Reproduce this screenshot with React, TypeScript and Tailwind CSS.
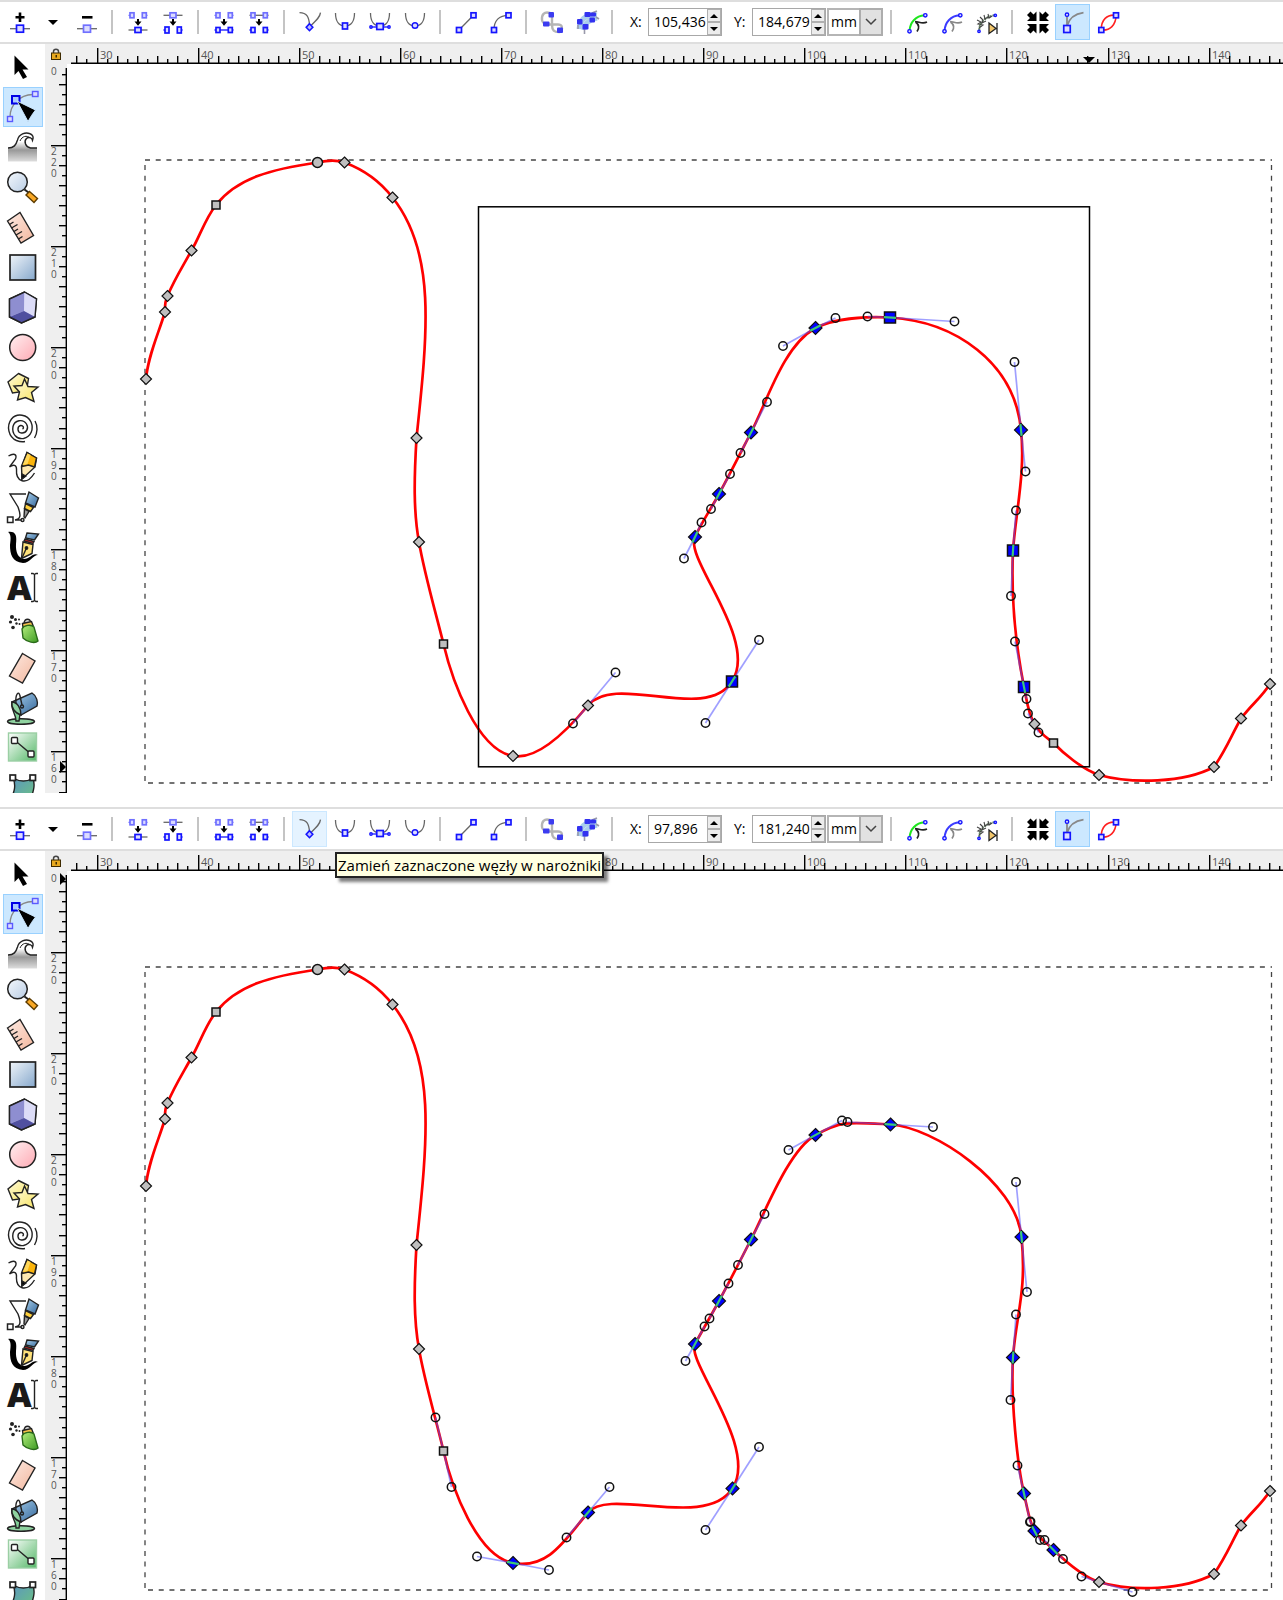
import React from 'react';

type Point = [number, number];
type Shape = 'diamond' | 'square' | 'circle';

interface PathNode {
  at: Point;
  shape: Shape;
  selected?: boolean;
  // handle towards the previous node / towards the next node
  before?: Point;
  after?: Point;
  showHandles?: boolean;
}

interface PanelProps {
  id: string;
  x: string;
  y: string;
  nodes: PathNode[];
  rubberBand?: boolean;
  tooltip?: string;
  markerX?: number;
  markerY: number;
}

const startNodes: PathNode[] = [
  { at: [146, 379], shape: 'diamond', after: [148, 356] },
  { at: [165, 312], shape: 'diamond', before: [158, 335], after: [165, 306] },
  { at: [167.5, 296], shape: 'diamond', before: [164.5, 302], after: [174, 280] },
  { at: [191.5, 250.5], shape: 'diamond', before: [183, 266], after: [200, 236] },
  { at: [216, 205], shape: 'square', before: [205, 219], after: [237, 178] },
  { at: [317.5, 162.5], shape: 'circle', before: [272, 169], after: [330, 160] },
  { at: [344.5, 162.5], shape: 'diamond', before: [336, 160], after: [362, 169] },
  { at: [392.5, 197.5], shape: 'diamond', before: [379, 180], after: [436, 252] },
  { at: [416.5, 438], shape: 'diamond', before: [428, 330], after: [414, 480] },
  { at: [419, 542], shape: 'diamond', before: [413.5, 512], after: [424, 572] },
];

const endNodes: PathNode[] = [
  { at: [1214, 767], shape: 'diamond', before: [1184, 783], after: [1227, 748] },
  { at: [1241, 718.5], shape: 'diamond', before: [1231, 736], after: [1252, 704] },
  { at: [1270, 684], shape: 'diamond', before: [1261, 698] },
];

const beforeNodes: PathNode[] = [
  ...startNodes,
  { at: [443.5, 644], shape: 'square', before: [435, 610], after: [452, 680] },
  { at: [513, 756], shape: 'diamond', before: [477, 750], after: [540, 761] },
  { at: [588, 705.5], shape: 'diamond', before: [573, 723.5], after: [615.5, 672.5], showHandles: true },
  { at: [732, 681.5], shape: 'square', selected: true, before: [705.5, 723], after: [759, 640], showHandles: true },
  { at: [695, 537], shape: 'diamond', selected: true, before: [684, 558.5], after: [701.5, 522.5], showHandles: true },
  { at: [719, 494], shape: 'diamond', selected: true, before: [711, 509], after: [730, 474], showHandles: true },
  { at: [751, 432.5], shape: 'diamond', selected: true, before: [740.5, 453], after: [767, 402], showHandles: true },
  { at: [815.5, 328], shape: 'diamond', selected: true, before: [783, 346], after: [835.5, 318], showHandles: true },
  { at: [890, 317.5], shape: 'square', selected: true, before: [867.5, 316.5], after: [954.5, 321.5], showHandles: true },
  { at: [1021, 430], shape: 'diamond', selected: true, before: [1014.5, 362], after: [1025.5, 471.5], showHandles: true },
  { at: [1013, 550.5], shape: 'square', selected: true, before: [1016, 510.5], after: [1011, 596], showHandles: true },
  { at: [1024, 687], shape: 'square', selected: true, before: [1015, 641.5], after: [1026.5, 699], showHandles: true },
  { at: [1034.5, 724], shape: 'diamond', before: [1028, 713.5], after: [1038.5, 732.5], showHandles: true },
  { at: [1053.5, 743], shape: 'square', before: [1047, 738], after: [1063, 753] },
  { at: [1099, 775], shape: 'diamond', before: [1082, 769], after: [1132, 784] },
  ...endNodes,
];

const afterNodes: PathNode[] = [
  ...startNodes,
  { at: [443.5, 644], shape: 'square', before: [435.5, 610.5], after: [451.5, 680], showHandles: true },
  { at: [513, 756], shape: 'diamond', selected: true, before: [477, 749.5], after: [549, 763], showHandles: true },
  { at: [588, 705.5], shape: 'diamond', selected: true, before: [566.5, 730.5], after: [609.5, 680], showHandles: true },
  { at: [732.5, 681.5], shape: 'diamond', selected: true, before: [705.5, 723], after: [759, 640], showHandles: true },
  { at: [695, 537], shape: 'diamond', selected: true, before: [685.5, 554], after: [704.5, 519.5], showHandles: true },
  { at: [719, 494], shape: 'diamond', selected: true, before: [709.5, 511.5], after: [728.5, 476.5], showHandles: true },
  { at: [751, 432.5], shape: 'diamond', selected: true, before: [738, 458], after: [764.5, 407], showHandles: true },
  { at: [815.5, 328], shape: 'diamond', selected: true, before: [788.5, 343], after: [842, 313.5], showHandles: true },
  { at: [890.5, 317.5], shape: 'diamond', selected: true, before: [847.5, 315], after: [933, 320], showHandles: true },
  { at: [1021.5, 430], shape: 'diamond', selected: true, before: [1016, 375], after: [1027, 485], showHandles: true },
  { at: [1013, 550.5], shape: 'diamond', selected: true, before: [1016, 507.5], after: [1010.5, 593], showHandles: true },
  { at: [1024, 686.5], shape: 'diamond', selected: true, before: [1017.5, 658.5], after: [1030, 715], showHandles: true },
  { at: [1034.5, 724], shape: 'diamond', selected: true, before: [1030.5, 714.5], after: [1040, 733], showHandles: true },
  { at: [1053.5, 743], shape: 'diamond', selected: true, before: [1044.5, 733], after: [1063, 752], showHandles: true },
  { at: [1099, 775], shape: 'diamond', before: [1081.5, 769.5], after: [1132.5, 785], showHandles: true },
  ...endNodes,
];

const buildPath = (nodes: PathNode[]) =>
  nodes
    .map((n, i) => {
      if (i === 0) return `M${n.at.join(' ')}`;
      const prev = nodes[i - 1];
      const c1 = prev.after ?? prev.at;
      const c2 = n.before ?? n.at;
      return `C${c1.join(' ')} ${c2.join(' ')} ${n.at.join(' ')}`;
    })
    .join('');

/* ---------- Toolbar icons ---------- */

const BLUE = '#1414ff';
const PALE = '#7070ff';

const Icon = ({ children }: { children: React.ReactNode }) => (
  <svg className="w-[30px] h-[30px]" viewBox="0 0 30 30" fill="none" stroke="#666" strokeWidth="1.3" aria-hidden="true">
    {children}
  </svg>
);

const Sq = ({ x, y, w = 5, h = 5, c = BLUE }: { x: number; y: number; w?: number; h?: number; c?: string }) => (
  <rect x={x - w / 2} y={y - h / 2} width={w} height={h} fill="#dcdcff" stroke={c} strokeWidth="1.7" />
);

const Dot = ({ x, y, r = 1.7 }: { x: number; y: number; r?: number }) => (
  <circle cx={x} cy={y} r={r} fill="#dcdcff" stroke={BLUE} strokeWidth="1.4" />
);

const DownArrow = () => (
  <g stroke="none" fill="#000">
    <rect x="14" y="12" width="2" height="4" />
    <path d="M11.5 14.5h7L15 18.8z" />
  </g>
);

const InsertNode = () => (
  <Icon>
    <path d="M15 5.5v9.5M10.5 10.3h9" stroke="#000" strokeWidth="2.6" />
    <path d="M5 21.7h20" />
    <Sq x={15} y={21.7} w={7} h={7} />
  </Icon>
);

const DeleteNode = () => (
  <Icon>
    <path d="M10 10.3h10.5" stroke="#000" strokeWidth="2.6" />
    <path d="M5 21.7h20" />
    <Sq x={15} y={21.7} w={7} h={7} c={PALE} />
  </Icon>
);

const JoinNodes = () => (
  <Icon>
    <path d="M5.5 8.3h3M21.5 8.3h3" stroke={PALE} />
    <Sq x={9} y={8.3} w={4} c={PALE} />
    <Sq x={21.3} y={8.3} w={4} c={PALE} />
    <DownArrow />
    <path d="M5.5 23h19" />
    <Sq x={15} y={23} w={6} />
  </Icon>
);

const BreakNode = () => (
  <Icon>
    <path d="M5.5 8.3h19" />
    <Sq x={15} y={8.3} w={6} c={PALE} />
    <DownArrow />
    <path d="M5.5 23h3M21.5 23h3" stroke={BLUE} />
    <Sq x={9} y={23} w={4} h={6} />
    <Sq x={21.3} y={23} w={4} h={6} />
  </Icon>
);

const JoinSegment = () => (
  <Icon>
    <path d="M5.5 8.3h3M21.5 8.3h3" stroke={PALE} />
    <Sq x={9} y={8.3} w={4} c={PALE} />
    <Sq x={21.3} y={8.3} w={4} c={PALE} />
    <DownArrow />
    <path d="M5.5 23h19" stroke={BLUE} />
    <Sq x={9} y={23} w={4} />
    <Sq x={21.3} y={23} w={4} />
  </Icon>
);

const DeleteSegment = () => (
  <Icon>
    <path d="M5.5 8.3h19" />
    <Sq x={9} y={8.3} w={4} c={PALE} />
    <Sq x={21.3} y={8.3} w={4} c={PALE} />
    <DownArrow />
    <path d="M5.5 23h3M21.5 23h3" stroke={BLUE} />
    <Sq x={9} y={23} w={4} />
    <Sq x={21.3} y={23} w={4} />
  </Icon>
);

const MakeCorner = () => (
  <Icon>
    <path d="M4.5 5.7C12 6 14 10 14.5 18M25.5 5.7C25 10 22 13 16 18.5" />
    <path d="M14.5 16.7l3.3 3.5-3.3 3.5-3.3-3.5z" fill="#bcbcff" stroke={BLUE} strokeWidth="1.6" />
  </Icon>
);

const MakeSmooth = () => (
  <Icon>
    <path d="M5.5 6C5.5 14 9 19 15 19S24.5 14 24.5 6" />
    <Sq x={15} y={19} w={5} h={6} />
  </Icon>
);

const MakeSymmetric = () => (
  <Icon>
    <path d="M5.5 6C5.5 14 9 19 15 19S24.5 14 24.5 6" />
    <path d="M6 20h18" stroke={BLUE} />
    <Dot x={6} y={20} r={1.2} />
    <Dot x={24} y={20} r={1.2} />
    <Sq x={15} y={19.5} w={6.5} h={6} />
  </Icon>
);

const MakeAuto = () => (
  <Icon>
    <path d="M5.5 6C5.5 14 9 19 15 19S24.5 14 24.5 6" />
    <Dot x={15} y={18.5} r={2.8} />
  </Icon>
);

const MakeLine = () => (
  <Icon>
    <path d="M8 23L22.5 8.3" />
    <Sq x={8} y={23} />
    <Sq x={22.5} y={8.3} />
  </Icon>
);

const MakeCurve = () => (
  <Icon>
    <path d="M8 23C8 14 13 8.3 22.5 8.3" />
    <Sq x={8} y={23} />
    <Sq x={22.5} y={8.3} />
  </Icon>
);

const ObjectToPath = () => (
  <Icon>
    <path d="M13 6C7 4 4.500 8 5 13c.3 3 2 4 8 4.500h8c4 0 5 3 3 6M15 8v10c0 5 2 7.500 8 7" stroke="#b5b5b5" strokeWidth="2.4" />
    <g fill="#3c3cf0" stroke="none">
      <rect x="11.500" y="5" width="5.500" height="5.500" rx="1" />
      <rect x="6" y="14.500" width="6.500" height="5" rx="1" />
      <rect x="20" y="20.500" width="6" height="5.500" rx="1" />
    </g>
  </Icon>
);

const StrokeToPath = () => (
  <Icon>
    <path d="M7 22c1-9 6-15 18-14M12 23c0-5 4-10 13-12" stroke="#a9cdec" strokeWidth="5" />
    <path d="M12.500 22v5M6 18v4M20 6l5-2M24 10l3 2" stroke="#99a" strokeWidth="1.6" />
    <g fill="#3232f0" stroke="none">
      <rect x="12.500" y="5" width="6" height="5" rx="1" />
      <rect x="18" y="5.500" width="6" height="4" rx="1" />
      <rect x="5" y="12" width="5.500" height="5.500" rx="1" />
      <rect x="10.500" y="17" width="6" height="5.500" rx="1" />
      <rect x="17.500" y="10.500" width="5.500" height="5" rx="1" />
    </g>
  </Icon>
);

const EditClip = () => (
  <Icon>
    <path d="M7.5 24C8 15 14 9 22.5 8.3" stroke="#1ee61e" strokeWidth="2" />
    <path d="M13 14.5c4 0 7 3 12 .5M13.500 15c4 3 4 6 1.500 9.500" stroke="#222" strokeWidth="1.7" />
    <Dot x={7.5} y={24.3} />
    <Dot x={23.3} y={8.3} />
  </Icon>
);

const EditMask = () => (
  <Icon>
    <path d="M7.5 24C8 15 14 9 22.5 8.3" stroke="#3c3cff" strokeWidth="2" />
    <path d="M13 14.5c4 0 7 3 12 .5M13.500 15c4 3 4 6 1.500 9.500" stroke="#888" strokeWidth="1.7" />
    <Dot x={7.5} y={24.3} />
    <Dot x={23.3} y={8.3} />
  </Icon>
);

const PathEffect = () => (
  <Icon>
    <path d="M7.3 23C7 15 14 9.500 22.5 8.3" stroke="#668866" strokeDasharray="2 1" strokeWidth="2" />
    <path d="M5 13l4 2-3 2 5 1-4 3M8 10l3 3-1 3 4-2M12 8l1 4 3-2M16 7l1 4 3-2" stroke="#444" strokeWidth="1.1" />
    <path d="M17 16l7 5.500-7 5zM25 16v11" fill="#f2c66b" stroke="#222" />
    <Dot x={7} y={24.3} r={1.2} />
    <Dot x={23.3} y={8.3} r={1.2} />
  </Icon>
);

const ShowTransform = () => (
  <Icon>
    <g stroke="none" fill="#000">
      {['', 'rotate(90 15 15.5)', 'rotate(180 15 15.5)', 'rotate(270 15 15.5)'].map((t) => (
        <path key={t} transform={t} d="M4 8L7.5 4.500l3 3 3-3v9.500H4l3-3z" />
      ))}
    </g>
  </Icon>
);

const ShowHandles = () => (
  <Icon>
    <path d="M9 9v13M9 19C11 12 16 7 25.5 5.7" stroke="#888" strokeWidth="1.8" />
    <Dot x={9} y={7.7} />
    <Sq x={9} y={22} w={6.5} h={7} />
  </Icon>
);

const ShowOutline = () => (
  <Icon>
    <path d="M8.3 23C8 13 14 7 23 8.3C23 18 17 24 8.3 23z" stroke="#ff2020" strokeWidth="1.6" />
    <Sq x={8.3} y={23} />
    <Sq x={23} y={8.3} />
  </Icon>
);

/* ---------- Toolbox icons ---------- */

const Tool = ({ children }: { children: React.ReactNode }) => (
  <svg className="w-8 h-8 overflow-visible" viewBox="0 0 32 32" fill="none" stroke="#222" strokeWidth="1.4" aria-hidden="true">
    {children}
  </svg>
);

const tools: { name: string; icon: React.ReactNode }[] = [
  {
    name: 'Wskaźnik',
    icon: <path d="M7.5 4.500v19.500l4-4 4.500 8 4-2-4.500-7.500h6z" fill="#000" stroke="none" />,
  },
  {
    name: 'Edycja węzłów',
    icon: (
      <>
        <path d="M3 26C3 14 12 4 26 3.5" stroke="#888" />
        <rect x="0.5" y="25.5" width="5" height="5" fill="#dcdcff" stroke="#5a5aff" />
        <rect x="25.5" y="0.5" width="5.5" height="5" fill="#dcdcff" stroke="#5a5aff" />
        <rect x="5" y="5" width="7.5" height="7.5" fill="#aacbff" stroke="#0000e6" strokeWidth="2" />
        <path d="M10 10L28.5 19q-4 5-7.500 11.500z" fill="#000" stroke="#cce8ff" strokeWidth="1" />
      </>
    ),
  },
  {
    name: 'Ulepszanie',
    icon: (
      <>
        <path d="M1 17c6 0 8-3 9.500-8 1.500-6 8-8 12-6.500 3.500 1 4.500 4 3 7-.5-3-4-4-6-2-3 3-1 8.500 4 9.500h6.500v13.500H1z" fill="url(#wave)" stroke="none" />
        <path d="M1 17c6 0 8-3 9.500-8 1.500-6 8-8 12-6.500 3.500 1 4.500 4 3 7-.5-3-4-4-6-2-3 3-1 8.500 4 9.500h6.500" />
        <path d="M13 10c2-5 7-6 10-3" strokeWidth="1" />
      </>
    ),
  },
  {
    name: 'Powiększenie',
    icon: (
      <>
        <path d="M17.5 18.5l4 3" strokeWidth="2" />
        <path d="M22.5 20.500l8 7-3.500 4-8-7.500z" fill="#f9a825" stroke="#5d3c00" />
        <circle cx="10.5" cy="11" r="9.8" fill="url(#glass)" strokeWidth="1.5" />
      </>
    ),
  },
  {
    name: 'Miarka',
    icon: (
      <>
        <path d="M0.5 10L13 1.5l13.5 23L14 32z" fill="url(#peach)" />
        <path d="M2.5 13.5l4-2.5M4.5 17l6-3.5M7 20.5l4-2.5M9 24l6-3.5M11.5 28l4-2.5" />
      </>
    ),
  },
  {
    name: 'Prostokąt',
    icon: <rect x="3" y="4" width="25.5" height="25" fill="url(#steel)" strokeWidth="1.7" />,
  },
  {
    name: 'Obiekt 3D',
    icon: (
      <>
        <path d="M17.5 1l12 7-1.5 18-13.5 6L2.5 26V8z" fill="#b9b9e6" />
        <path d="M17.5 1l12 7-1.5 18-11-6z" fill="#dcdcf7" stroke="none" />
        <path d="M17 1.5v18.5L3 25.5V8z" fill="#8e8ed0" stroke="none" />
        <path d="M17 20l11 6-13.5 6L2.5 26z" fill="#5050a0" stroke="none" />
        <path d="M17.5 1l12 7-1.5 18-13.5 6L2.5 26V8z" />
      </>
    ),
  },
  {
    name: 'Okrąg',
    icon: <circle cx="15.7" cy="16.5" r="13" fill="url(#rose)" strokeWidth="1.5" />,
  },
  {
    name: 'Gwiazda',
    icon: (
      <g fill="url(#lemon)">
        <path d="M11.5 2.500l10 5-2 12.5-14 2L1 11z" />
        <path d="M17.500 8l3.5 7.5 10 .5-6.5 5.500 2.5 9-8.500-4-8 2.500 2-8-5.500-6 8-.5z" />
      </g>
    ),
  },
  {
    name: 'Spirala',
    icon: (
      <path d="M15.500 18c2-1 .5-4-2-3.500-3.500 1-3.500 7 1 7.500 5 .5 7.500-5 5-9C16 7.500 7.500 9 6 15.500 4.500 23 10 28.500 16.500 27.500 24 26 27 18 24 11 20.500 3.500 10 1.500 4.500 8c-5.500 7-3 18 5 21.500 2.500 1 6 1.500 8.500 1M27.500 27c3-5 3.500-12 .5-17" />
    ),
  },
  {
    name: 'Ołówek',
    icon: (
      <>
        <path d="M1.5 5c5-3 9-2 7 3l-6 8c4-3 7-2 7 2-1 13 10 17 18 4" />
        <path d="M15 28l-.5-13L20 1.500l9.500 5.500-1.500 9z" fill="#ffe9b0" />
        <path d="M15 15.5L20 1.5l9.5 5.5-2 9-6-2z" fill="#fbb40a" />
        <path d="M20.500 2.500l3 1.500-3 9-5 1z" fill="#ffd75a" stroke="none" />
        <path d="M14.8 28v-5l4 2z" fill="#000" />
      </>
    ),
  },
  {
    name: 'Krzywa Beziera',
    icon: (
      <>
        <path d="M19 3H3l8 13c3 8 3 12-3 13h7" />
        <rect x="0.5" y="26" width="5.5" height="5.5" fill="#fff" strokeWidth="1.5" />
        <circle cx="15.5" cy="29" r="1.5" fill="#fff" />
        <path d="M22 1l9.500 6-3.500 9-9.500-4z" fill="url(#pen)" />
        <path d="M18.500 12.500l8 4-3 4-6-3z" fill="#ffd03c" />
        <path d="M17.500 18l4.500 2.500-4 6.500-1-1z" fill="#999" />
      </>
    ),
  },
  {
    name: 'Kaligrafia',
    icon: (
      <>
        <path d="M1 1c8-1 9 4 8 12-.5 8 2 14 8 15 6 0 9-7 14-4-5 0-8 8-15 8C5 31 3 23 3 14 4 7 4 3 1 1z" fill="#000" stroke="none" />
        <path d="M20 2l11.500 1-4 6-9-2z" fill="url(#pen)" />
        <path d="M18 8l9 2.5-1 2-9-2.5z" fill="#d22" />
        <path d="M16 11l10 2.5-1 9-10.5 5z" fill="#ffe27a" />
        <path d="M15 27l4-9" />
        <circle cx="19.5" cy="17" r="1.2" fill="#000" />
      </>
    ),
  },
  {
    name: 'Tekst',
    icon: (
      <>
        <text x="0" y="29" fontFamily="Open Sans, sans-serif" fontSize="34" fontWeight="800" fill="#1a1a1a" stroke="none">A</text>
        <path d="M27.5 3v27M24 2.5h2l1.5 1 1.5-1h2M24 30.5h2l1.5-1 1.5 1h2" />
      </>
    ),
  },
  {
    name: 'Natryskiwanie',
    icon: (
      <>
        <g fill="#222" stroke="none">
          <circle cx="5" cy="6" r="2" />
          <circle cx="3.500" cy="11" r="1.600" />
          <circle cx="8.500" cy="8.500" r="1.500" />
          <circle cx="6" cy="16.500" r="1.800" />
          <circle cx="9.500" cy="12.500" r="1.200" />
          <circle cx="12" cy="8.500" r="1" />
          <circle cx="12.500" cy="13" r="1" />
        </g>
        <path d="M17 12c1-5 6-5 7 0" fill="#ddd" />
        <path d="M15.500 12.500l9-2 1.500 4-10 2z" fill="#f5c04a" />
        <path d="M15 18c2-4 9-5 12-2l4 14c-3 3-11 1-15-3z" fill="url(#spray)" stroke="#2a6a1a" />
      </>
    ),
  },
  {
    name: 'Gumka',
    icon: <path d="M15.500 2.500L28 10 15.500 32 2.5 25z" fill="url(#peach)" />,
  },
  {
    name: 'Wypełnianie',
    icon: (
      <>
        <ellipse cx="14" cy="30.5" rx="13.500" ry="2.8" fill="#8fd3a0" />
        <path d="M5 11l8-1 1 7-1 6-1 7-3 0c0-8-5-9-4-19z" fill="#7fcf96" />
        <path d="M5 11L25 2c5 3 6 9 5 13L14 24C8 22 4 16 5 11z" fill="url(#pen)" />
        <path d="M5 11c-1 6 3 11 9 13 0-7-4-13-9-13z" fill="#8fd3a0" />
        <path d="M9 12C8 3 12-1 13 5l2 9" />
        <circle cx="15" cy="15.5" r="1.5" />
      </>
    ),
  },
  {
    name: 'Gradient',
    icon: (
      <>
        <rect x="1.5" y="2" width="28" height="28" fill="url(#grad)" stroke="#9bcfa4" />
        <path d="M8 9.500l16 13.500" />
        <rect x="4.5" y="6.500" width="6" height="6" rx="1" fill="#fff" />
        <rect x="21" y="20" width="6" height="6" rx="1" fill="#fff" />
      </>
    ),
  },
  {
    name: 'Siatka',
    icon: (
      <>
        <path d="M6 7c7 4 14 4 20 0 3 9-1 16-3 24H3c3-8 7-15 3-24z" fill="url(#mesh)" />
        <rect x="3" y="4" width="5.5" height="5.5" fill="#fff" strokeWidth="1.7" />
        <rect x="23" y="4" width="5.5" height="5.5" fill="#fff" strokeWidth="1.7" />
      </>
    ),
  },
];

const Gradient = ({ id, from, to }: { id: string; from: string; to: string }) => (
  <linearGradient id={id} x1="0" y1="0" x2="1" y2="1">
    <stop offset="0" stopColor={from} />
    <stop offset="1" stopColor={to} />
  </linearGradient>
);

/* ---------- Toolbar parts ---------- */

interface ToolButtonProps {
  label: string;
  active?: boolean;
  hovered?: boolean;
  children: React.ReactNode;
}

const ToolButton: React.FC<ToolButtonProps> = ({ label, active, hovered, children }) => (
  <button
    aria-label={label}
    className={`flex h-9 w-[35px] shrink-0 items-center justify-center border ${
      active ? 'border-[#99d1ff] bg-[#cce8ff]' : hovered ? 'border-[#cce8ff] bg-[#e5f3ff]' : 'border-transparent'
    }`}
  >
    {children}
  </button>
);

const Separator = () => <div className="mx-[7px] h-6 w-[2px] shrink-0 bg-[#c4c4c4]" />;

const NumberField = ({ id, label, value }: { id: string; label: string; value: string }) => (
  <>
    <label htmlFor={id} className="w-[18px] shrink-0">{label}</label>
    <div className="flex h-7 w-[74px] shrink-0 border border-[#a8a8a8]">
      <input id={id} defaultValue={value} className="w-[57px] min-w-0 bg-white pl-[5px] text-sm outline-none" />
      <div className="ml-auto flex w-[14px] flex-col">
        <button aria-label={`${label} +`} className="flex flex-1 items-center justify-center border border-[#b0b0b0] bg-[#ececec]">
          <svg className="h-1 w-2" viewBox="0 0 8 4"><path d="M0 4l4-4 4 4z" /></svg>
        </button>
        <button aria-label={`${label} -`} className="flex flex-1 items-center justify-center border border-[#b0b0b0] bg-[#ececec]">
          <svg className="h-1 w-2" viewBox="0 0 8 4"><path d="M0 0l4 4 4-4z" /></svg>
        </button>
      </div>
    </div>
  </>
);

const Toolbar = ({ id, x, y, tooltip }: { id: string; x: string; y: string; tooltip?: string }) => (
  <div className="flex h-11 items-center overflow-hidden border-y-2 border-[#dedede] bg-white pl-[2px] text-sm">
    <ToolButton label="Wstaw węzeł"><InsertNode /></ToolButton>
    <button aria-label="Więcej" className="flex h-9 w-8 shrink-0 items-center justify-center">
      <svg className="h-[5px] w-[10px]" viewBox="0 0 10 5"><path d="M0 0h10L5 5z" /></svg>
    </button>
    <ToolButton label="Usuń węzeł"><DeleteNode /></ToolButton>
    <Separator />
    <ToolButton label="Połącz węzły"><JoinNodes /></ToolButton>
    <ToolButton label="Rozłącz węzły"><BreakNode /></ToolButton>
    <Separator />
    <ToolButton label="Połącz odcinkiem"><JoinSegment /></ToolButton>
    <ToolButton label="Usuń odcinek"><DeleteSegment /></ToolButton>
    <Separator />
    <ToolButton label="Narożniki" hovered={!!tooltip}><MakeCorner /></ToolButton>
    <ToolButton label="Gładkie"><MakeSmooth /></ToolButton>
    <ToolButton label="Symetryczne"><MakeSymmetric /></ToolButton>
    <ToolButton label="Automatyczne"><MakeAuto /></ToolButton>
    <Separator />
    <ToolButton label="Zamień na linie"><MakeLine /></ToolButton>
    <ToolButton label="Zamień na krzywe"><MakeCurve /></ToolButton>
    <Separator />
    <ToolButton label="Obiekt w ścieżkę"><ObjectToPath /></ToolButton>
    <ToolButton label="Kontur w ścieżkę"><StrokeToPath /></ToolButton>
    <Separator />
    <div className="flex shrink-0 items-center gap-0 pl-[10px]">
      <NumberField id={`${id}-x`} label="X:" value={x} />
      <div className="w-3" />
      <NumberField id={`${id}-y`} label="Y:" value={y} />
    </div>
    <div className="relative ml-[1px] h-7 w-14 shrink-0">
      <select aria-label="Jednostka" className="h-full w-full appearance-none border-2 border-[#b5b5b5] bg-white pl-[2px] text-sm outline-none">
        <option>mm</option>
        <option>px</option>
      </select>
      <div className="pointer-events-none absolute inset-y-0 right-0 flex w-6 items-center justify-center border-2 border-[#adadad] bg-[#e1e1e1]">
        <svg className="h-2 w-3" viewBox="0 0 12 8" fill="none" stroke="#444" strokeWidth="1.5"><path d="M1 1l5 5 5-5" /></svg>
      </div>
    </div>
    <Separator />
    <ToolButton label="Edytuj przycięcie"><EditClip /></ToolButton>
    <ToolButton label="Edytuj maskę"><EditMask /></ToolButton>
    <ToolButton label="Efekt ścieżki"><PathEffect /></ToolButton>
    <Separator />
    <ToolButton label="Uchwyty przekształcenia"><ShowTransform /></ToolButton>
    <ToolButton label="Uchwyty węzłów" active><ShowHandles /></ToolButton>
    <ToolButton label="Kontur ścieżki"><ShowOutline /></ToolButton>
  </div>
);

/* ---------- Rulers ---------- */

const STEP = 10.11;

const HorizontalRuler = ({ marker }: { marker?: number }) => (
  <svg className="h-5 min-w-0 flex-1 bg-[#efefef]" aria-hidden="true">
    <g transform="translate(-67 -44)">
      <path d="M71 63.2H3000" stroke="#000" strokeWidth="1.6" />
      {Array.from({ length: 120 }, (_, k) => {
        const i = k - 2;
        const x = Math.round(96.500 + i * STEP);
        const major = i % 10 === 0;
        return (
          <g key={i}>
            <rect x={x} y={major ? 48 : i % 2 === 0 ? 56 : 59} width="1.4" height={major ? 15 : i % 2 === 0 ? 7 : 4} />
            {major && (
              <text x={x + 3} y={59} fontSize="11" fill="#555" fontFamily="Open Sans, sans-serif">{30 + i}</text>
            )}
          </g>
        );
      })}
      {marker && <path d={`M${marker - 6} 57h12l-6 6z`} />}
    </g>
  </svg>
);

const VerticalRuler = ({ marker }: { marker: number }) => (
  <svg className="h-full w-[22px] shrink-0 bg-[#efefef]" aria-hidden="true">
    <g transform="translate(-45 -64)">
      <path d="M66.3 68V793" stroke="#000" strokeWidth="1.4" />
      <text x="51" y="75" fontSize="10" fill="#555" fontFamily="Open Sans, sans-serif">0</text>
      {Array.from({ length: 72 }, (_, k) => {
        const i = k - 7;
        const y = Math.round(144.500 + i * STEP);
        const major = i % 10 === 0;
        const from = major ? 51 : i % 2 === 0 ? 59 : 62;
        return (
          <g key={i}>
            <rect x={from} y={y} width={67 - from} height="1.4" />
            {major &&
              String(220 - i).split('').map((d, n) => (
                <text key={n} x="51" y={y + 10 + n * 11} fontSize="10" fill="#555" fontFamily="Open Sans, sans-serif">{d}</text>
              ))}
          </g>
        );
      })}
      <path d={`M60 ${marker - 6}v12l6-6z`} />
    </g>
  </svg>
);

/* ---------- Canvas ---------- */

const NodeMark = ({ node }: { node: PathNode }) => {
  const [x, y] = node.at;
  const fill = node.selected ? '#0000ff' : '#bfbfbf';
  const r = node.selected ? 6.5 : 5.5;
  const s = node.selected ? 5.5 : 4;
  const a = node.before ?? node.at;
  const b = node.after ?? node.at;
  const len = Math.hypot(b[0] - a[0], b[1] - a[1]) || 1;
  const dx = ((b[0] - a[0]) / len) * 6;
  const dy = ((b[1] - a[1]) / len) * 6;
  return (
    <g stroke="#111" strokeWidth="1.2" fill={fill}>
      {node.shape === 'diamond' && <path d={`M${x} ${y - r}l${r} ${r}-${r} ${r}-${r}-${r}z`} />}
      {node.shape === 'square' && <rect x={x - s} y={y - s} width={s * 2} height={s * 2} strokeWidth="1.5" />}
      {node.shape === 'circle' && <circle cx={x} cy={y} r="5" strokeWidth="1.5" />}
      {node.selected && <path d={`M${x - dx} ${y - dy}L${x + dx} ${y + dy}`} stroke="#3cc878" strokeWidth="2.2" />}
    </g>
  );
};

const Canvas = ({ nodes, rubberBand }: { nodes: PathNode[]; rubberBand?: boolean }) => {
  const handles = nodes.flatMap((n) =>
    n.showHandles && n.before && n.after ? [{ from: n.at, to: n.before }, { from: n.at, to: n.after }] : []
  );
  return (
    <svg className="h-full min-w-0 flex-1" role="img" aria-label="Ścieżka">
      <g transform="translate(-67 -64)" fill="none">
        <g stroke="#444" strokeWidth="1.3" strokeDasharray="5 5.72">
          <path d="M145 160H1272M148 783H1272" />
          <path d="M145 165V783M1271.5 165V783" />
        </g>
        <path d={buildPath(nodes)} stroke="#ff0000" strokeWidth="2.7" />
        {rubberBand && <rect x="478.5" y="206.8" width="611" height="560" stroke="#000" strokeWidth="1.5" />}
        {handles.map((h, i) => (
          <path key={i} d={`M${h.from.join(' ')}L${h.to.join(' ')}`} stroke="#5050ff" strokeOpacity="0.55" strokeWidth="1.7" />
        ))}
        {nodes.map((n, i) => (
          <NodeMark key={i} node={n} />
        ))}
        {handles.map((h, i) => (
          <circle key={i} cx={h.to[0]} cy={h.to[1]} r="4.2" stroke="#111" strokeWidth="1.5" />
        ))}
      </g>
    </svg>
  );
};

const Panel: React.FC<PanelProps> = ({ id, x, y, nodes, rubberBand, tooltip, markerX, markerY }) => (
  <section className="relative">
    <Toolbar id={id} x={x} y={y} tooltip={tooltip} />
    <div className="flex h-[749px]">
      <div className="flex w-[45px] shrink-0 flex-col overflow-hidden pl-[3px] pt-[3px]">
        {tools.map((t, i) => (
          <button
            key={t.name}
            aria-label={t.name}
            className={`flex h-10 w-10 shrink-0 items-center justify-center border ${
              i === 1 ? 'border-[#99d1ff] bg-[#cce8ff]' : 'border-transparent'
            }`}
          >
            <Tool>{t.icon}</Tool>
          </button>
        ))}
      </div>
      <div className="flex min-w-0 flex-1 flex-col">
        <div className="flex h-5 shrink-0">
          <button aria-label="Blokada prowadnic" className="flex w-[22px] shrink-0 items-center justify-center bg-[#efefef]">
            <svg className="h-3 w-3" viewBox="0 0 12 12" aria-hidden="true">
              <path d="M3.5 6V3.5C3.5 0.5 8.5 0.5 8.5 3.5V6" fill="none" stroke="#444" strokeWidth="1.5" />
              <rect x="1.5" y="5" width="9" height="6.5" fill="#e8a920" stroke="#3d2a00" />
              <rect x="5.5" y="7" width="1.5" height="2.5" fill="#3d2a00" />
            </svg>
          </button>
          <HorizontalRuler marker={markerX} />
        </div>
        <div className="flex min-h-0 flex-1">
          <VerticalRuler marker={markerY} />
          <Canvas nodes={nodes} rubberBand={rubberBand} />
        </div>
      </div>
    </div>
    {tooltip && (
      <div
        role="tooltip"
        className="absolute left-[335px] top-[45px] flex h-[26px] items-center whitespace-nowrap border-2 border-[#222] bg-[#ffffe1] px-[1px] text-[15px] shadow-[4px_4px_3px_rgba(0,0,0,0.5)]"
      >
        {tooltip}
      </div>
    )}
  </section>
);

const App: React.FC = () => {
  return (
    <main className="bg-white font-['Open_Sans',sans-serif] text-black">
      <svg className="absolute h-0 w-0" aria-hidden="true">
        <defs>
          <linearGradient id="wave" x1="0" y1="0" x2="0" y2="1">
            <stop offset="0.3" stopColor="#fff" />
            <stop offset="0.6" stopColor="#999" />
            <stop offset="1" stopColor="#ddd" />
          </linearGradient>
          <Gradient id="glass" from="#f4f8fd" to="#b9cde4" />
          <Gradient id="peach" from="#fdeae2" to="#f3b79e" />
          <Gradient id="steel" from="#f0f5fa" to="#86a8cc" />
          <Gradient id="rose" from="#fff0f1" to="#ffaab4" />
          <Gradient id="lemon" from="#fffbe0" to="#f7e35c" />
          <Gradient id="pen" from="#a9d0ec" to="#35689c" />
          <Gradient id="spray" from="#b5ef7d" to="#3c9a22" />
          <Gradient id="grad" from="#ffffff" to="#55b868" />
          <Gradient id="mesh" from="#5b94c4" to="#6cc47e" />
        </defs>
      </svg>
      <div className="flex flex-col gap-[14px]">
        <Panel id="top" x="105,436" y="184,679" nodes={beforeNodes} rubberBand markerX={1089} markerY={767} />
        <Panel id="bottom" x="97,896" y="181,240" nodes={afterNodes} tooltip="Zamień zaznaczone węzły w narożniki" markerY={72} />
      </div>
    </main>
  );
};

export default App;
